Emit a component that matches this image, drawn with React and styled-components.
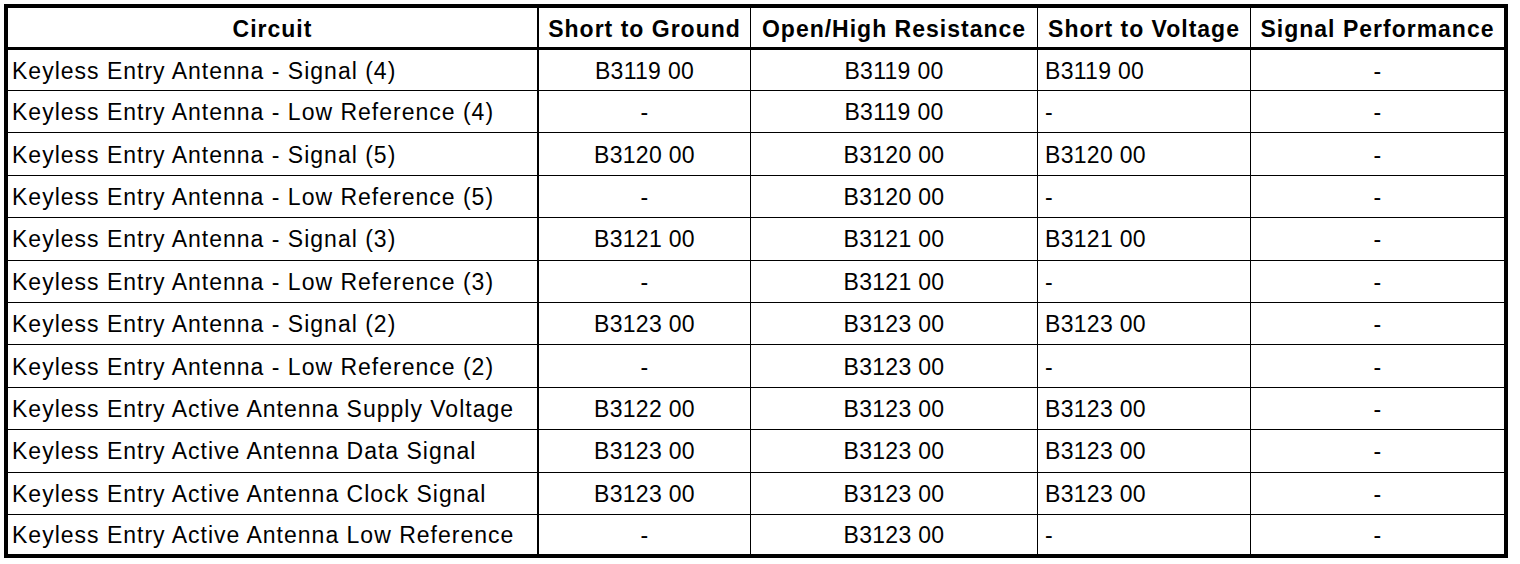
import styled, { createGlobalStyle } from 'styled-components';

const GlobalStyle = createGlobalStyle`
  body {
    margin: 0;
    background: #ffffff;
    font-family: "Liberation Sans", Arial, sans-serif;
  }
`;

const columns = [
  { title: 'Circuit', width: 531, align: 'left' },
  { title: 'Short to Ground', width: 212, align: 'center' },
  { title: 'Open/High Resistance', width: 287, align: 'center' },
  { title: 'Short to Voltage', width: 213, align: 'left' },
  { title: 'Signal Performance', width: 253, align: 'center' },
];

const rows = [
  ['Keyless Entry Antenna - Signal (4)', 'B3119 00', 'B3119 00', 'B3119 00', '-'],
  ['Keyless Entry Antenna - Low Reference (4)', '-', 'B3119 00', '-', '-'],
  ['Keyless Entry Antenna - Signal (5)', 'B3120 00', 'B3120 00', 'B3120 00', '-'],
  ['Keyless Entry Antenna - Low Reference (5)', '-', 'B3120 00', '-', '-'],
  ['Keyless Entry Antenna - Signal (3)', 'B3121 00', 'B3121 00', 'B3121 00', '-'],
  ['Keyless Entry Antenna - Low Reference (3)', '-', 'B3121 00', '-', '-'],
  ['Keyless Entry Antenna - Signal (2)', 'B3123 00', 'B3123 00', 'B3123 00', '-'],
  ['Keyless Entry Antenna - Low Reference (2)', '-', 'B3123 00', '-', '-'],
  ['Keyless Entry Active Antenna Supply Voltage', 'B3122 00', 'B3123 00', 'B3123 00', '-'],
  ['Keyless Entry Active Antenna Data Signal', 'B3123 00', 'B3123 00', 'B3123 00', '-'],
  ['Keyless Entry Active Antenna Clock Signal', 'B3123 00', 'B3123 00', 'B3123 00', '-'],
  ['Keyless Entry Active Antenna Low Reference', '-', 'B3123 00', '-', '-'],
];

function rowHeight(r) {
  if (r === 0) return 40;
  if (r === rows.length - 1) return 39;
  return 41.4;
}

function App() {
  return (
    <>
      <GlobalStyle />
      <TableWrap>
        <HeaderRow>
          {columns.map((col, i) => (
            <HeadCell key={col.title} width={col.width} first={i === 0} last={i === columns.length - 1}>
              {col.title}
            </HeadCell>
          ))}
        </HeaderRow>
        {rows.map((row, r) => (
          <BodyRow key={r} h={rowHeight(r)} last={r === rows.length - 1}>
            {row.map((text, c) => (
              <Cell
                key={c}
                width={columns[c].width}
                align={columns[c].align}
                first={c === 0}
                last={c === columns.length - 1}
              >
                {text}
              </Cell>
            ))}
          </BodyRow>
        ))}
      </TableWrap>
    </>
  );
}

const TableWrap = styled.div`
  width: 1496px;
  margin: 4px;
  border: 4px solid #000;
  background: #fff;
  color: #000;
`;

const HeaderRow = styled.div`
  display: flex;
  height: 39px;
  border-bottom: 3px solid #000;
`;

const BodyRow = styled.div`
  display: flex;
  height: ${p => p.h}px;
  border-bottom: ${p => (p.last ? 'none' : '1px solid #000')};
`;

const HeadCell = styled.div`
  box-sizing: border-box;
  width: ${p => p.width}px;
  display: flex;
  align-items: center;
  justify-content: center;
  border-right: ${p => (p.last ? 'none' : p.first ? '2px solid #000' : '1px solid #000')};
  font-size: 23px;
  font-weight: bold;
  letter-spacing: 1px;
  padding-top: 3px;
  white-space: nowrap;
`;

const Cell = styled.div`
  box-sizing: border-box;
  width: ${p => p.width}px;
  display: flex;
  align-items: center;
  justify-content: ${p => (p.align === 'center' ? 'center' : 'flex-start')};
  padding-top: 2px;
  padding-left: ${p => (p.first ? '4px' : p.align === 'left' ? '7px' : '0')};
  border-right: ${p => (p.last ? 'none' : p.first ? '2px solid #000' : '1px solid #000')};
  font-size: 23px;
  letter-spacing: ${p => (p.first ? '1px' : '0.3px')};
  white-space: nowrap;
`;

export default App;
